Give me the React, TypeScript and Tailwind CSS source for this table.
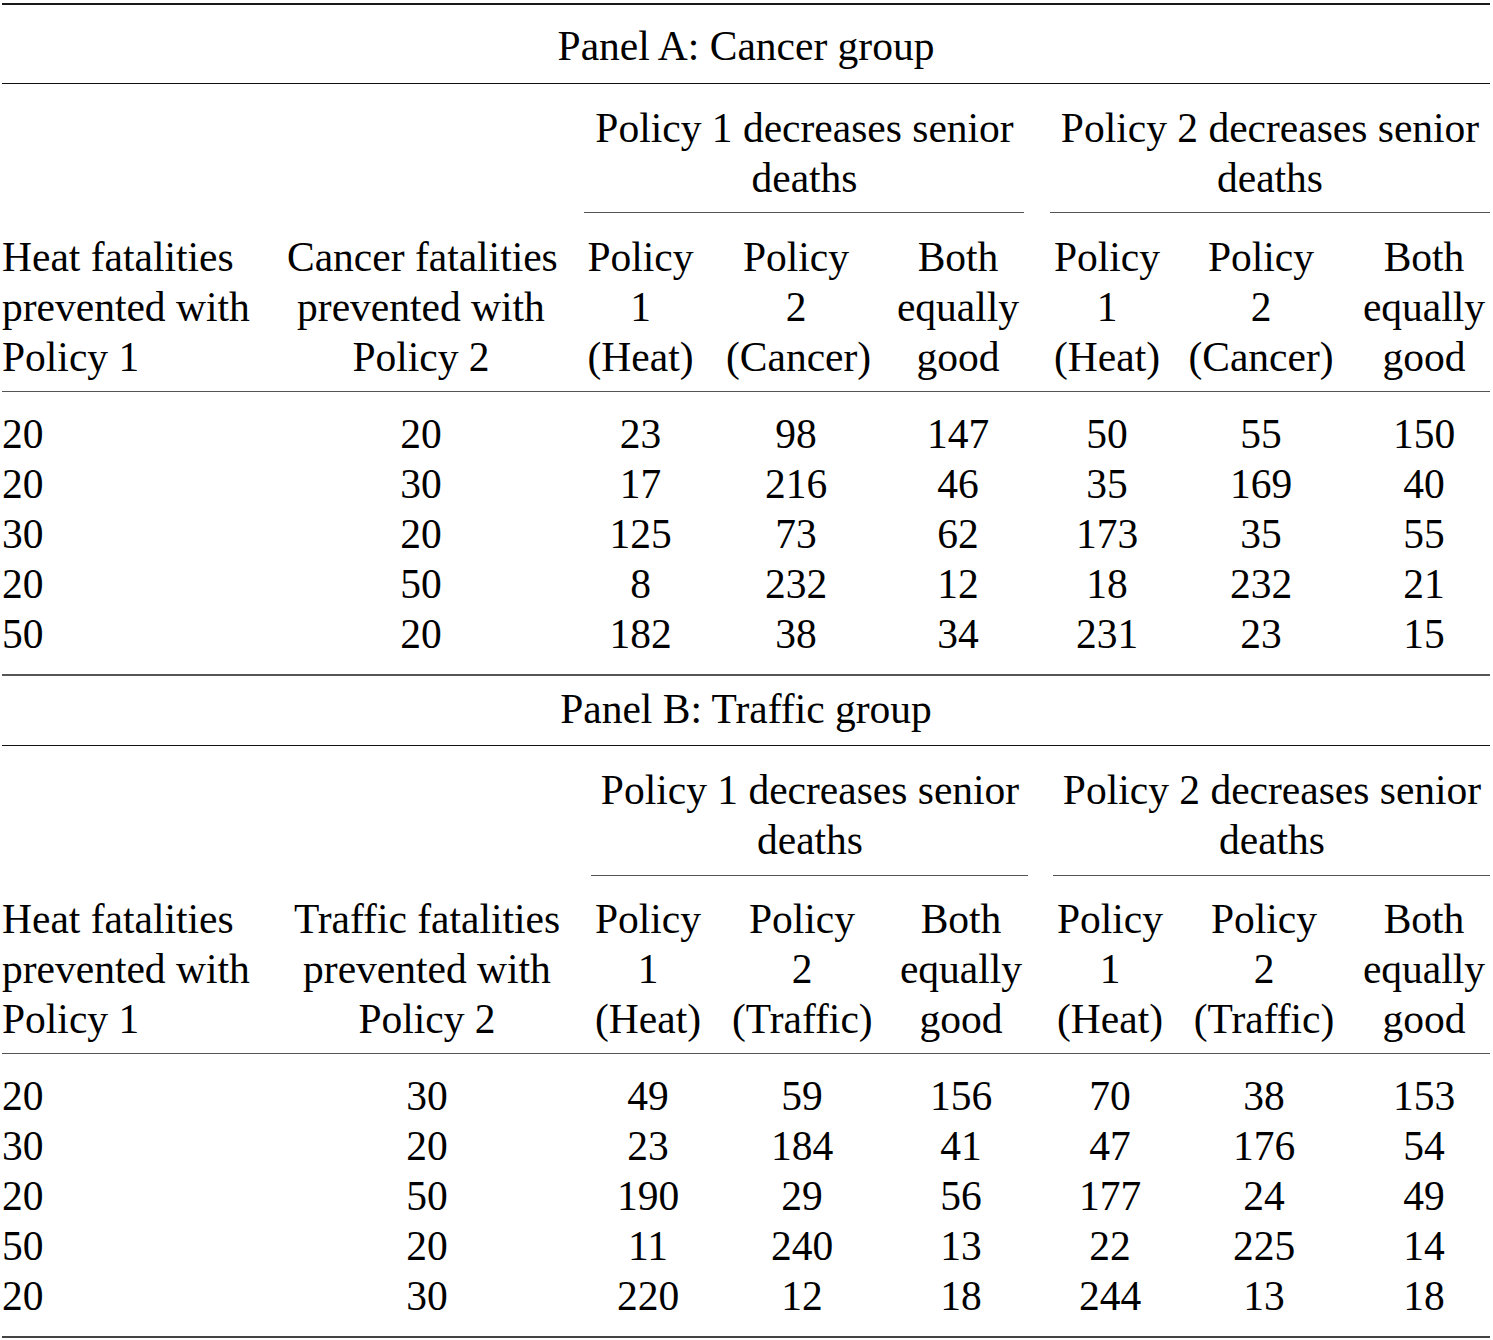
import React from "react";

type PanelProps = {
  title: string;
  kind: string;
  rows: number[][];
  gridCols: string;
  titleClass: string;
  groupPad: string;
  headPad: string;
  g1Line: string;
  g1Text: string;
  g2Line: string;
  g2Text: string;
};

function L({ children }: { children: React.ReactNode }) {
  return <span className="block whitespace-nowrap">{children}</span>;
}

function Panel(p: PanelProps) {
  return (
    <div>
      <div className={p.titleClass}>
        <div className="text-center whitespace-nowrap">{p.title}</div>
      </div>
      <div className="h-[1px] bg-[#111]" />
      {/* group header */}
      <div className={`grid ${p.gridCols}`}>
        <div className="col-span-2" />
        <div className="col-span-3 flex flex-col">
          <div className={`${p.groupPad} ${p.g1Text} text-center`}>
            <L>Policy 1 decreases senior</L>
            <L>deaths</L>
          </div>
          <div className={`h-[1px] bg-[#555] ${p.g1Line}`} />
        </div>
        <div className="col-span-3 flex flex-col">
          <div className={`${p.groupPad} ${p.g2Text} text-center`}>
            <L>Policy 2 decreases senior</L>
            <L>deaths</L>
          </div>
          <div className={`h-[1px] bg-[#555] ${p.g2Line}`} />
        </div>
      </div>
      {/* column header */}
      <div className={`grid ${p.gridCols} ${p.headPad}`}>
        <div className="text-left">
          <L>Heat fatalities</L>
          <L>prevented with</L>
          <L>Policy 1</L>
        </div>
        <div className="text-center">
          <L>{p.kind} fatalities</L>
          <L>prevented with</L>
          <L>Policy 2</L>
        </div>
        {[0, 1].map((g) => (
          <React.Fragment key={g}>
            <div className="text-center">
              <L>Policy</L>
              <L>1</L>
              <L>(Heat)</L>
            </div>
            <div className="text-center">
              <L>Policy</L>
              <L>2</L>
              <L>({p.kind})</L>
            </div>
            <div className="text-center">
              <L>Both</L>
              <L>equally</L>
              <L>good</L>
            </div>
          </React.Fragment>
        ))}
      </div>
      <div className="h-[1px] bg-[#555]" />
      {/* data */}
      <div className="pt-[17px] pb-[15px]">
        {p.rows.map((r, i) => (
          <div key={i} className={`grid ${p.gridCols}`}>
            {r.map((v, j) => (
              <div key={j} className={j === 0 ? "text-left" : "text-center"}>
                {v}
              </div>
            ))}
          </div>
        ))}
      </div>
    </div>
  );
}

export default function App() {
  const rowsA = [
    [20, 20, 23, 98, 147, 50, 55, 150],
    [20, 30, 17, 216, 46, 35, 169, 40],
    [30, 20, 125, 73, 62, 173, 35, 55],
    [20, 50, 8, 232, 12, 18, 232, 21],
    [50, 20, 182, 38, 34, 231, 23, 15],
  ];
  const rowsB = [
    [20, 30, 49, 59, 156, 70, 38, 153],
    [30, 20, 23, 184, 41, 47, 176, 54],
    [20, 50, 190, 29, 56, 177, 24, 49],
    [50, 20, 11, 240, 13, 22, 225, 14],
    [20, 30, 220, 12, 18, 244, 13, 18],
  ];
  return (
    <div className="bg-white w-[1493px] h-[1340px] pt-[3px] [font-family:'Liberation_Serif','Times_New_Roman',serif] text-[41.5px] leading-[50px] text-black">
      <div className="ml-[2px] w-[1488px]">
        <div className="h-[2px] bg-[#1a1a1a]" />
        <Panel
          title="Panel A: Cancer group"
          kind="Cancer"
          rows={rowsA}
          gridCols="grid-cols-[285px_268px_171px_140px_184px_114px_194px_132px]"
          titleClass="pt-[16px] pb-[12px]"
          groupPad="pt-[19px] pb-[9px]"
          headPad="pt-[19px] pb-[9px]"
          g1Line="ml-[29px] mr-[26px]"
          g1Text="pl-[4px]"
          g2Line="ml-0"
          g2Text="pl-0"
        />
        <div className="h-[2px] bg-[#555]" />
        <Panel
          title="Panel B: Traffic group"
          kind="Traffic"
          rows={rowsB}
          gridCols="grid-cols-[288px_274px_168px_140px_178px_120px_188px_132px]"
          titleClass="pt-[8px] pb-[11px]"
          groupPad="pt-[19px] pb-[10px]"
          headPad="pt-[18px] pb-[9px]"
          g1Line="ml-[27px] mr-[22px]"
          g1Text="pl-[6px]"
          g2Line="ml-[3px]"
          g2Text="pl-[4px]"
        />
        <div className="h-[2px] bg-[#444]" />
      </div>
    </div>
  );
}
